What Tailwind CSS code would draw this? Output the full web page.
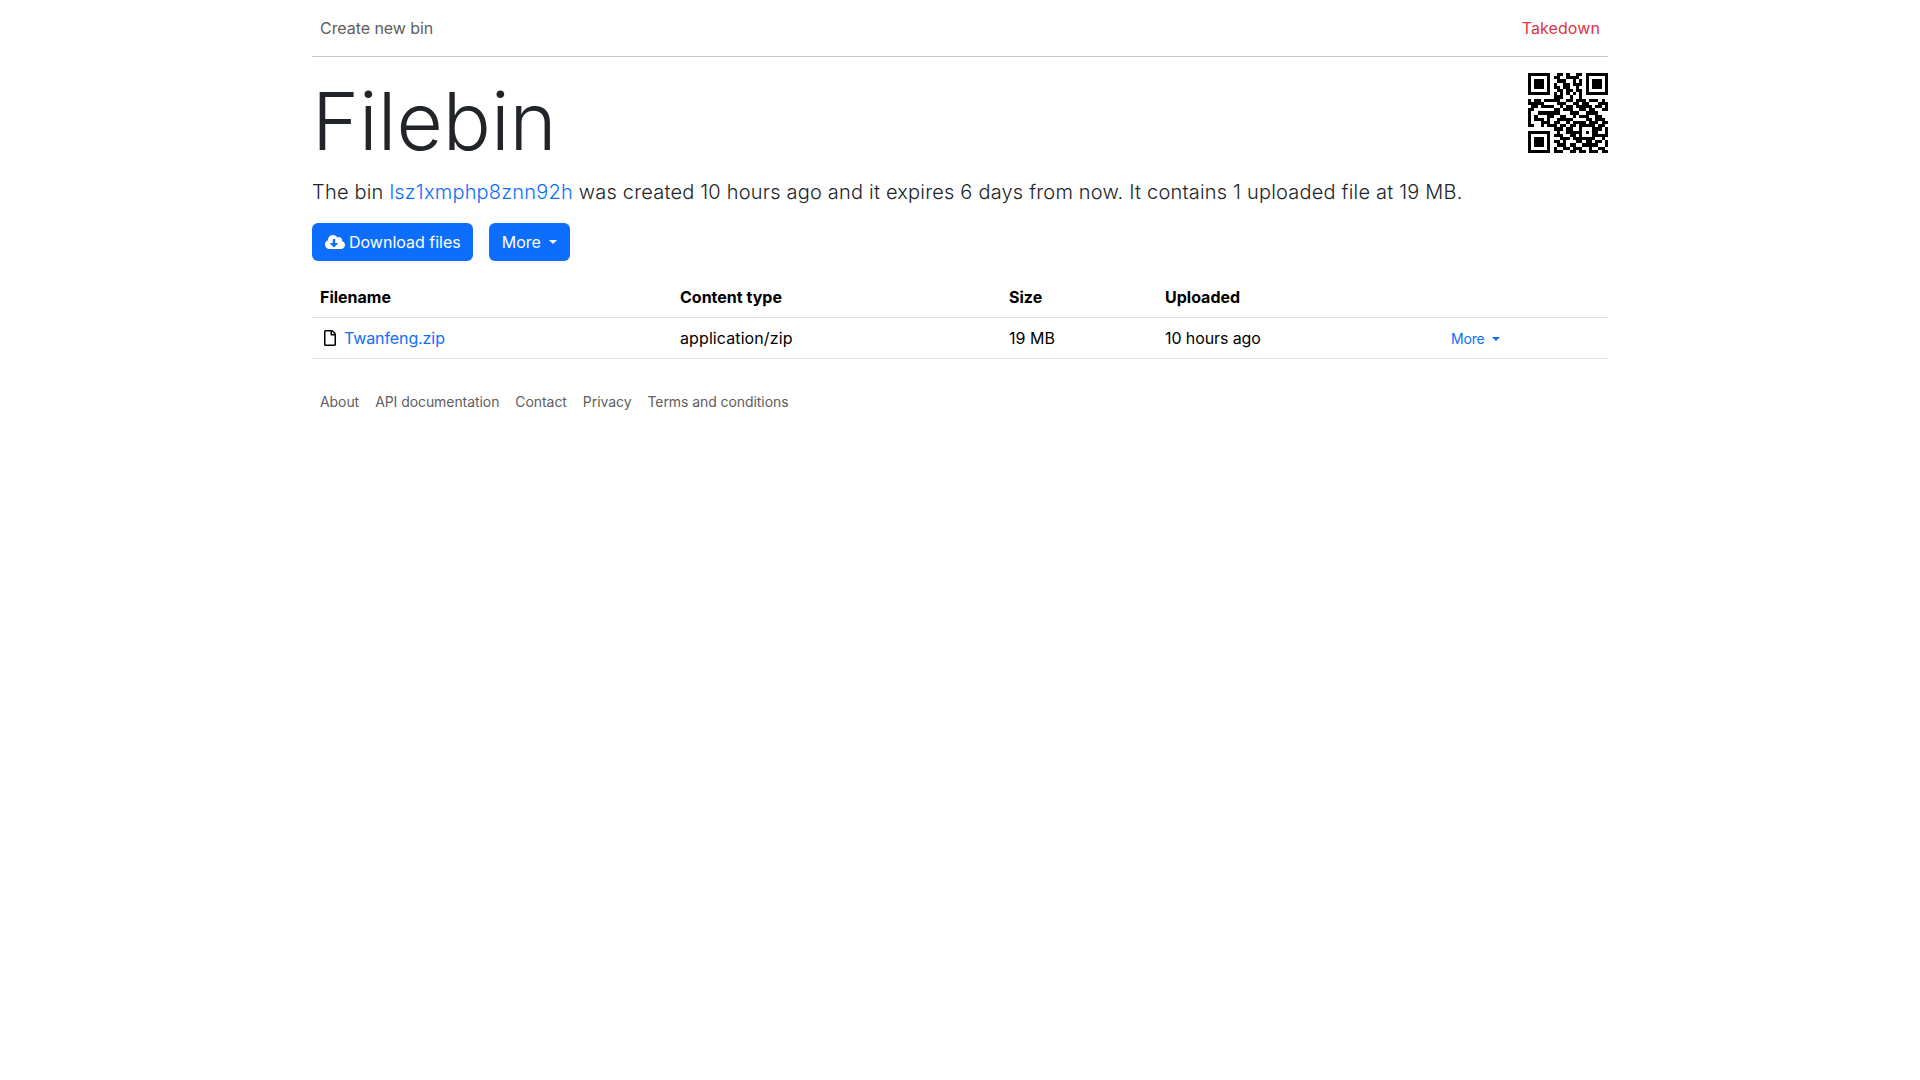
<!DOCTYPE html>
<html lang="en">

<head>
  <meta charset="UTF-8">
  <meta name="viewport" content="width=device-width, initial-scale=1.0">
  <title>Filebin</title>
  <script src="https://cdn.jsdelivr.net/npm/@tailwindcss/browser@4"></script>
</head>

<body class="bg-white text-[#212529] font-['Inter',sans-serif] text-base">
  <div class="w-[1296px] mx-auto">
    <!-- top nav -->
    <nav class="h-[57px] flex items-center justify-between px-2 border-b border-[#c8c8c8] mb-4">
      <a href="#" class="text-[#5e5e5e] tracking-[-0.06px]">Create new bin</a>
      <a href="#" class="text-[#dc3545] tracking-[0.1px]">Takedown</a>
    </nav>

    <!-- heading + qr -->
    <div class="flex justify-between items-start">
      <h1 class="text-[80px] leading-[96px] font-light mb-2">Filebin</h1>
      <svg id="qr" class="w-20 h-20" viewBox="0 0 25 25" shape-rendering="crispEdges" fill="#000"></svg>
    </div>

    <p class="text-[20px] leading-[30px] font-light tracking-[0.2px] mb-4">The bin <a href="#" class="text-[#0d6efd]">lsz1xmphp8znn92h</a> was created 10 hours ago and it expires 6 days from now. It contains 1 uploaded file at 19 MB.</p>

    <!-- buttons -->
    <div class="flex gap-4 mb-4">
      <a href="#" class="h-[38px] pl-[13px] pr-3 flex items-center bg-[#0d6efd] text-white rounded-md">
        <svg class="w-5 h-4 mr-1" viewBox="0 0 640 512" fill="currentColor"><path d="M537.6 226.6c4.1-10.7 6.4-22.4 6.4-34.6 0-53-43-96-96-96-19.7 0-38.1 6-53.3 16.2C367 64.2 315.3 32 256 32c-88.4 0-160 71.6-160 160 0 2.7.1 5.4.2 8.1C40.2 219.8 0 273.2 0 336c0 79.5 64.5 144 144 144h368c70.7 0 128-57.3 128-128 0-61.9-44-113.6-102.4-125.4zm-132.9 88.7L299.3 420.7c-6.2 6.2-16.4 6.2-22.6 0L171.3 315.3c-10.1-10.1-2.9-27.3 11.3-27.3H248V176c0-8.8 7.2-16 16-16h48c8.8 0 16 7.2 16 16v112h65.4c14.2 0 21.4 17.2 11.3 27.3z"/></svg>
        Download files
      </a>
      <a href="#" class="h-[38px] px-[13px] flex items-center bg-[#0d6efd] text-white rounded-md">
        More
        <span class="ml-2 border-t-[4.8px] border-x-[4.8px] border-t-white border-x-transparent"></span>
      </a>
    </div>

    <!-- files -->
    <table class="w-full table-fixed text-black">
      <colgroup>
        <col class="w-[360px]">
        <col class="w-[329px]">
        <col class="w-[156px]">
        <col class="w-[286px]">
        <col>
      </colgroup>
      <thead>
        <tr class="border-b border-[#dee2e6]">
          <th class="p-2 text-left font-bold">Filename</th>
          <th class="p-2 text-left font-bold">Content type</th>
          <th class="p-2 text-left font-bold">Size</th>
          <th class="p-2 text-left font-bold">Uploaded</th>
          <th class="p-2"></th>
        </tr>
      </thead>
      <tbody>
        <tr class="border-b border-[#dee2e6]">
          <td class="p-2">
            <div class="flex items-center">
              <span class="w-5 mr-1 flex justify-center">
                <svg class="w-3 h-4" viewBox="0 0 384 512" fill="currentColor"><path d="M369.9 97.9L286 14C277 5 264.8-.1 252.1-.1H48C21.5 0 0 21.5 0 48v416c0 26.5 21.5 48 48 48h288c26.5 0 48-21.5 48-48V131.9c0-12.7-5.1-25-14.1-34zM332.1 128H256V51.9l76.1 76.1zM48 464V48h160v104c0 13.3 10.7 24 24 24h104v288H48z"/></svg>
              </span>
              <a href="#" class="text-[#0d6efd] tracking-[-0.1px]">Twanfeng.zip</a>
            </div>
          </td>
          <td class="p-2 tracking-[0.1px]">application/zip</td>
          <td class="p-2">19 MB</td>
          <td class="p-2 tracking-[-0.1px]">10 hours ago</td>
          <td class="p-2">
            <a href="#" class="flex items-center pt-px text-sm text-[#0d6efd] tracking-[-0.2px]">
              More
              <span class="ml-2 border-t-[4.2px] border-x-[4.2px] border-t-[#0d6efd] border-x-transparent"></span>
            </a>
          </td>
        </tr>
      </tbody>
    </table>

    <!-- footer -->
    <footer class="flex text-sm text-[#5e5e5e] tracking-[-0.07px] mt-[25px]">
      <a href="#" class="p-2">About</a>
      <a href="#" class="p-2">API documentation</a>
      <a href="#" class="p-2">Contact</a>
      <a href="#" class="p-2">Privacy</a>
      <a href="#" class="p-2">Terms and conditions</a>
    </footer>
  </div>

  <script>
    // qr modules, one string per row
    const rows = [
      '1111111001101001101111111',
      '1000001011001111001000001',
      '1011101001110010101011101',
      '1011101010011011101011101',
      '1011101011011001001011101',
      '1000001001101101101000001',
      '1111111010101010101111111',
      '0000000011100100100000000',
      '1011011111001101110111010',
      '1111100001110011011000111',
      '0110111100101101111101101',
      '1100000011011100110110011',
      '1001111111000111001111000',
      '1010001100110010111001100',
      '1011101001111100001101110',
      '1000111011001011110111011',
      '1100101110110110111110110',
      '0000000011101100100011101',
      '1111111001001111101011001',
      '1000001011100110100011111',
      '1011101000111011111110010',
      '1011101011010001101101101',
      '1011101001110110011111001',
      '1000001010011011100100110',
      '1111111011100110110111011'
    ];
    let d = '';
    rows.forEach((row, y) => {
      [...row].forEach((m, x) => {
        if (m === '1') d += `M${x} ${y}h1v1h-1z`;
      });
    });
    const path = document.createElementNS('http://www.w3.org/2000/svg', 'path');
    path.setAttribute('d', d);
    document.getElementById('qr').appendChild(path);
  </script>
</body>

</html>
